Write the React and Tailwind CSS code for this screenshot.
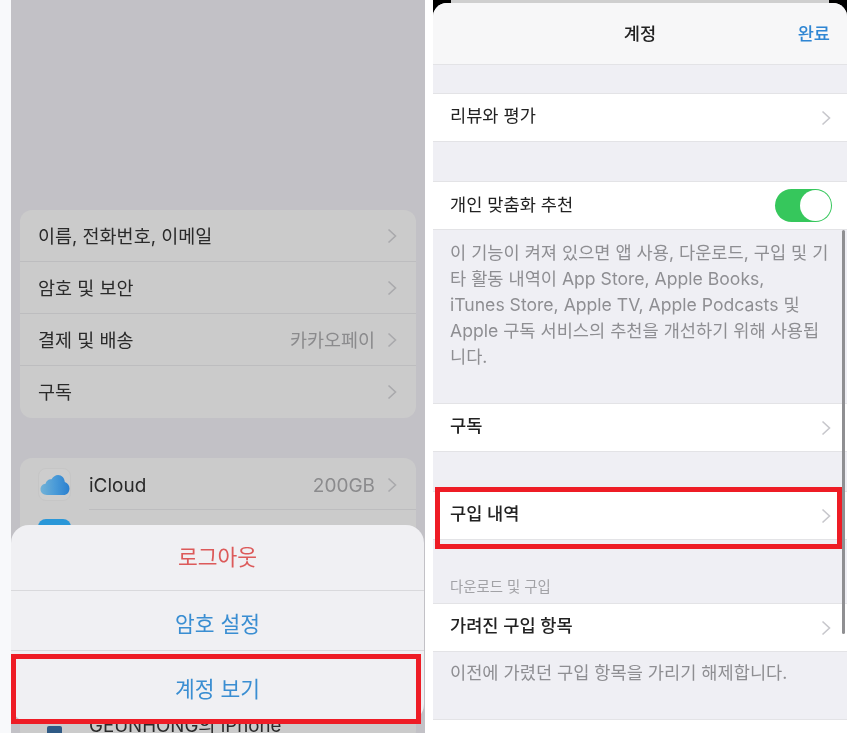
const Chevron = ({ color = "#a9a9ac" }) => (
  <svg width="10" height="16" viewBox="0 0 10 16" fill="none" className="shrink-0">
    <path d="M1.5 1.5 8.5 8 1.5 14.5" stroke={color} strokeWidth="1.6" />
  </svg>
);

const accountRows = [
  { label: "이름, 전화번호, 이메일" },
  { label: "암호 및 보안" },
  { label: "결제 및 배송", value: "카카오페이" },
  { label: "구독" },
];

const CardRow = ({ label, value }) => (
  <div className="flex h-[52px] items-center pl-[18px] pr-[19px]">
    <span className="flex-1 pt-[2px] text-[18.5px] text-[#2a2a2a]">{label}</span>
    {value && <span className="mr-[12px] pt-[2px] text-[18.5px] text-[#8b8b8d]">{value}</span>}
    <Chevron />
  </div>
);

const SettingRow = ({ label, medium }) => (
  <div className="flex h-[49px] items-center border-y border-[#e3e3e6] bg-white pl-[17px] pr-[16px]">
    <span className={`flex-1 pb-[3px] text-[17.6px] text-[#222222] ${medium ? "font-medium" : ""}`}>{label}</span>
    <Chevron color="#c7c7cc" />
  </div>
);

const CloudIcon = () => (
  <svg width="30" height="20" viewBox="0 0 30 20">
    <defs>
      <linearGradient id="cloud" x1="0" y1="0" x2="1" y2="0">
        <stop offset="0" stopColor="#73b2d6" />
        <stop offset="0.5" stopColor="#4a9bd8" />
        <stop offset="1" stopColor="#2a7fcf" />
      </linearGradient>
    </defs>
    <path
      d="M7 20C3 20 .5 17.500.5 14.300c0-3 2.200-5.300 5-5.600C6.500 5.300 9 3.800 11.500 4.300 13 1.600 15.500 0 18 0c3.800 0 6.600 3 6.800 7C27.600 7.800 29.500 10.500 29.500 13.500 29.500 17.300 27 20 23.500 20Z"
      fill="url(#cloud)"
    />
  </svg>
);

const descLines = [
  "이 기능이 켜져 있으면 앱 사용, 다운로드, 구입 및 기",
  "타 활동 내역이 App Store, Apple Books,",
  "iTunes Store, Apple TV, Apple Podcasts 및",
  "Apple 구독 서비스의 추천을 개선하기 위해 사용됩",
  "니다.",
];

const App = () => {
  return (
    <div className="flex h-[733px] w-[847px] overflow-hidden bg-white font-['Inter','Noto_Sans_CJK_KR',sans-serif]">
      <div className="h-full w-[11px] shrink-0 bg-[#f8f9fb]" />

      {/* Left phone */}
      <div className="relative h-full w-[414px] shrink-0 overflow-hidden bg-[#c2c1c6]">
        <div className="relative h-full px-[9px] pt-[210px] blur-[0.5px]">
          <div className="divide-y divide-[#bdbdbf] rounded-[12px] bg-[#cbcbcb]">
            {accountRows.map((row) => (
              <CardRow key={row.label} {...row} />
            ))}
          </div>

          <div className="mt-[40px] rounded-[12px] bg-[#cbcbcb]">
            <div className="flex h-[51px] items-center pl-[18px] pr-[19px] pt-[2px]">
              <div className="mr-[18px] flex h-[33px] w-[33px] items-center justify-center rounded-[8px] border border-[#c6c6c6] bg-[#cdcdcd]">
                <CloudIcon />
              </div>
              <span className="flex-1 pt-[4px] text-[19px] text-[#2a2a2a]">iCloud</span>
              <span className="mr-[12px] pt-[4px] text-[19px] text-[#8b8b8d]">200GB</span>
              <Chevron />
            </div>
            <div className="ml-[69px] h-px bg-[#bdbdbf]" />
            <div className="ml-[18px] mt-[9px] h-[33px] w-[33px] rounded-[8px] bg-[#2a97d8]" />
            <div className="mt-[164px] flex items-start pl-[27px]">
              <div className="mr-[27px] mt-[10px] h-[16px] w-[15px] rounded-[2px] bg-[#2f5a85]" />
              <span className="text-[18.7px] leading-[20px] text-[#2a2a2a]">GEUNHONG의 iPhone</span>
            </div>
          </div>

          {/* Action sheet */}
          <div className="absolute left-0 top-[525px] h-[197px] w-[413px] rounded-[18px] bg-[#f0f0f3] text-center text-[21.5px]">
            <div className="flex h-[66px] items-center justify-center border-b border-[#d9d9dc] text-[#dc5a5a]">로그아웃</div>
            <div className="flex h-[59px] items-center justify-center pt-[8px] text-[#3a8ed2]">암호 설정</div>
            <div className="flex h-[72px] items-center justify-center border-t border-[#d9d9dc] pt-[6px] text-[#3a8ed2]">계정 보기</div>
          </div>
        </div>

        <div className="absolute left-0 top-[654px] h-[70px] w-[410px] border-[5px] border-[#ee1c25]" />
      </div>

      <div className="h-full w-[8px] shrink-0 bg-white" />

      {/* Right phone */}
      <div className="relative h-full w-[414px] shrink-0 overflow-hidden bg-black">
        <div className="h-full blur-[0.5px]">
          <div className="mx-[18px] h-[3px] bg-[#cfcfcf]" />
          <div className="h-[730px] rounded-t-[14px] bg-[#efeff4]">
            <div className="relative flex h-[62px] items-center justify-center rounded-t-[14px] border-b border-[#e3e3e6] bg-[#f7f7f8] pt-[2px]">
              <span className="text-[17.6px] font-medium text-[#222222]">계정</span>
              <span className="absolute right-[17px] text-[17.6px] font-medium text-[#2f86d3]">완료</span>
            </div>

            <div className="pt-[28px]">
              <SettingRow label="리뷰와 평가" />
            </div>

            <div className="pt-[39px]">
              <div className="flex h-[49px] items-center border-y border-[#e3e3e6] bg-white pl-[17px] pr-[15px]">
                <span className="flex-1 text-[17.6px] text-[#222222]">개인 맞춤화 추천</span>
                <div className="flex h-[33px] w-[57px] items-center justify-end rounded-full bg-[#36c75c] pr-[1px]">
                  <div className="h-[31px] w-[31px] rounded-full bg-white" />
                </div>
              </div>
            </div>

            <div className="h-[173px] pl-[17px] pt-[10px] text-[17.6px] leading-[26px] text-[#8e8e92]">
              {descLines.map((line) => (
                <div key={line} className="whitespace-nowrap">{line}</div>
              ))}
            </div>

            <SettingRow label="구독" medium />

            <div className="pt-[39px]">
              <SettingRow label="구입 내역" medium />
            </div>

            <div className="flex h-[63px] items-end pb-[5px] pl-[17px] text-[14.4px] text-[#a2a2a6]">다운로드 및 구입</div>
            <SettingRow label="가려진 구입 항목" medium />

            <div className="h-[67px] pl-[17px] pt-[8px] text-[17.6px] leading-[26px] text-[#8e8e92]">
              이전에 가렸던 구입 항목을 가리기 해제합니다.
            </div>
            <div className="h-[20px] border-t border-[#e3e3e6] bg-white" />
          </div>
        </div>

        <div className="absolute left-[409px] top-[230px] h-[404px] w-[3px] rounded-full bg-[#8f8f92]" />
        <div className="absolute left-[2px] top-[487px] h-[62px] w-[407px] border-[5px] border-[#ee1c25]" />
      </div>
    </div>
  );
};

export default App;
